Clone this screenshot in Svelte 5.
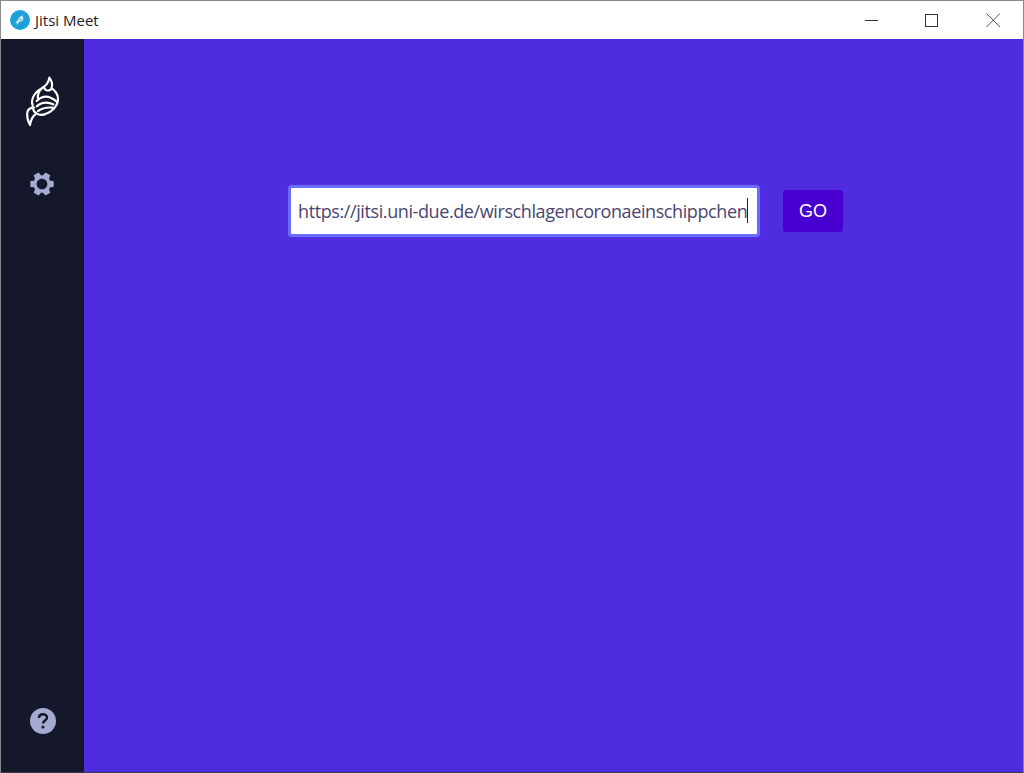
<script>
	const url = 'https://jitsi.uni-due.de/wirschlagencoronaeinschippchen';
</script>

<div class="window">
	<header class="titlebar">
		<svg class="app-icon" width="20" height="20" viewBox="0 0 20 20">
			<circle cx="10" cy="10" r="10" fill="#1d9fdc" />
			<path d="M12.500 3.500c.6 1.200-.4 2-1.300 2.800-1.600.4-3.200 1.800-3.400 3.600-.9.8-1.800 1.900-2.300 3.600.8-.4 1.300-.8 1.800-1.300-.1 1-.5 1.800-1 2.500 1.500-.6 2.200-1.900 2.800-2.800 2.300.2 4-1.200 4.200-3.200.1-1.300-.6-2-1.200-2.600.8-.7 1.100-1.600.4-2.600z" fill="#e8f5fb" />
			<path d="M8.500 9.300c1.200-.9 2.400-.8 3.600.2M8.500 11c1-.5 2-.4 3 .1" fill="none" stroke="#1d9fdc" stroke-width="0.800" />
		</svg>
		<span class="title">Jitsi Meet</span>
		<div class="controls">
			<button class="control" aria-label="Minimize">
				<svg width="14" height="14" viewBox="0 0 14 14"><path d="M1 7.500h13" stroke="#333" stroke-width="1" /></svg>
			</button>
			<button class="control maximize" aria-label="Maximize">
				<svg width="14" height="14" viewBox="0 0 14 14"><rect x="1.500" y="1.500" width="12" height="12" fill="none" stroke="#333" stroke-width="1" /></svg>
			</button>
			<button class="control" aria-label="Close">
				<svg width="14" height="14" viewBox="0 0 14 14"><path d="M.5.500l13.500 13.500M14 .5L.5 14" stroke="#555" stroke-width="1" fill="none" /></svg>
			</button>
		</div>
	</header>

	<div class="body">
		<aside class="sidebar">
			<svg class="logo" width="65" height="70" viewBox="0 0 195 210" fill="none" stroke="#fff" stroke-width="6.500" stroke-linejoin="round" stroke-linecap="round">
				<path d="M118 38c6 8 12 18 6 32 12 6 22 20 20 36-2 18-18 36-40 42-12 3-20 2-26-4-6-4-10-12-10-22-4-12-2-24 8-36 6-8 14-14 22-18 10-6 18-14 20-30z" />
				<path d="M72 128c-10 0-18 4-20 14-2 12 2 26 8 38 2-14 6-24 16-32" />
				<path d="M98 68c-10 8-16 20-14 34" />
				<path d="M80 108c12-12 28-16 42-10 8 3 14 8 20 14" />
				<path d="M80 124c14-12 32-14 50-6" />
				<path d="M84 138c12-8 28-12 44-10" />
				<path d="M102 66c2 8 8 14 20 8" />
			</svg>
			<svg class="gear" width="28" height="28" viewBox="0 0 24 24">
				<path transform="rotate(90 12 12)" fill="#a5aad1" d="M19.430 12.980c.04-.32.07-.64.07-.98s-.03-.66-.07-.98l2.110-1.650c.19-.15.24-.42.12-.64l-2-3.460c-.12-.22-.39-.3-.61-.22l-2.490 1c-.52-.4-1.080-.73-1.690-.98l-.38-2.650C14.460 2.180 14.250 2 14 2h-4c-.25 0-.46.18-.49.42l-.38 2.650c-.61.25-1.170.59-1.690.98l-2.490-1c-.23-.09-.49 0-.61.22l-2 3.460c-.13.22-.07.49.12.64l2.110 1.650c-.04.32-.07.65-.07.98s.03.66.07.98l-2.110 1.650c-.19.15-.24.42-.12.64l2 3.460c.12.22.39.3.61.22l2.490-1c.52.4 1.080.73 1.690.98l.38 2.650c.03.24.24.42.49.42h4c.25 0 .46-.18.49-.42l.38-2.650c.61-.25 1.170-.59 1.690-.98l2.490 1c.23.09.49 0 .61-.22l2-3.460c.12-.22.07-.49-.12-.64l-2.110-1.650zM12 16.600c-2.540 0-4.600-2.060-4.600-4.600s2.060-4.600 4.600-4.600 4.600 2.060 4.600 4.600-2.060 4.600-4.600 4.600z" />
			</svg>
			<svg class="help" width="26" height="26" viewBox="0 0 26 26">
				<circle cx="13" cy="13" r="13" fill="#a5aad1" />
				<path d="M9 10c0-2.400 1.800-3.800 4-3.800s4 1.400 4 3.400c0 2.800-4 3-4 6" fill="none" stroke="#141729" stroke-width="2.400" />
				<rect x="11.700" y="17.800" width="2.600" height="2.600" fill="#141729" />
			</svg>
		</aside>

		<main class="main">
			<div class="url-box">
				<span class="url">{url}</span><span class="caret"></span>
			</div>
			<button class="go">GO</button>
		</main>
	</div>
</div>

<style>
	:global(body) {
		margin: 0;
	}

	.window {
		width: 1024px;
		height: 773px;
		box-sizing: border-box;
		border: 1px solid #8a8a8a;
		border-bottom-color: #3a3a48;
		display: flex;
		flex-direction: column;
		overflow: hidden;
	}

	.titlebar {
		height: 38px;
		flex: none;
		background: #fff;
		display: flex;
		align-items: center;
		padding-left: 9px;
	}

	.app-icon {
		margin-right: 5px;
	}

	.title {
		font-family: "Open Sans", sans-serif;
		font-size: 15px;
		color: #1c1c28;
	}

	.controls {
		margin-left: auto;
		display: flex;
	}

	.control {
		width: 61px;
		height: 38px;
		padding: 0;
		border: none;
		background: none;
		display: flex;
		align-items: center;
		justify-content: center;
	}

	.maximize svg {
		margin-right: 2px;
	}

	.body {
		flex: 1;
		display: flex;
		min-height: 0;
	}

	.sidebar {
		width: 83px;
		flex: none;
		background: #15172a;
		display: flex;
		flex-direction: column;
		align-items: center;
		padding: 26px 0 38px;
		box-sizing: border-box;
	}

	.gear {
		margin-top: 35px;
		margin-right: 1px;
	}

	.help {
		margin-top: auto;
	}

	.main {
		flex: 1;
		background: #4f2cdf;
		display: flex;
		align-items: flex-start;
		padding: 146px 0 0 204px;
		box-sizing: border-box;
	}

	.url-box {
		width: 472px;
		height: 52px;
		box-sizing: border-box;
		background: #fff;
		border: 3px solid #6a6cff;
		border-radius: 4px;
		box-shadow: 0 0 1px #6a6cff;
		display: flex;
		align-items: center;
		padding: 0 0 1px 7px;
		font-family: "Open Sans", sans-serif;
		font-size: 18px;
		letter-spacing: -0.4px;
		color: #4a4570;
		white-space: nowrap;
	}

	.caret {
		width: 1px;
		height: 25px;
		background: #222;
		flex: none;
	}

	.go {
		margin: 5px 0 0 23px;
		width: 60px;
		height: 42px;
		padding: 0;
		border: none;
		border-radius: 3px;
		background: #4700d0;
		color: #fff;
		font-family: "Liberation Sans", sans-serif;
		font-size: 18px;
	}
</style>
